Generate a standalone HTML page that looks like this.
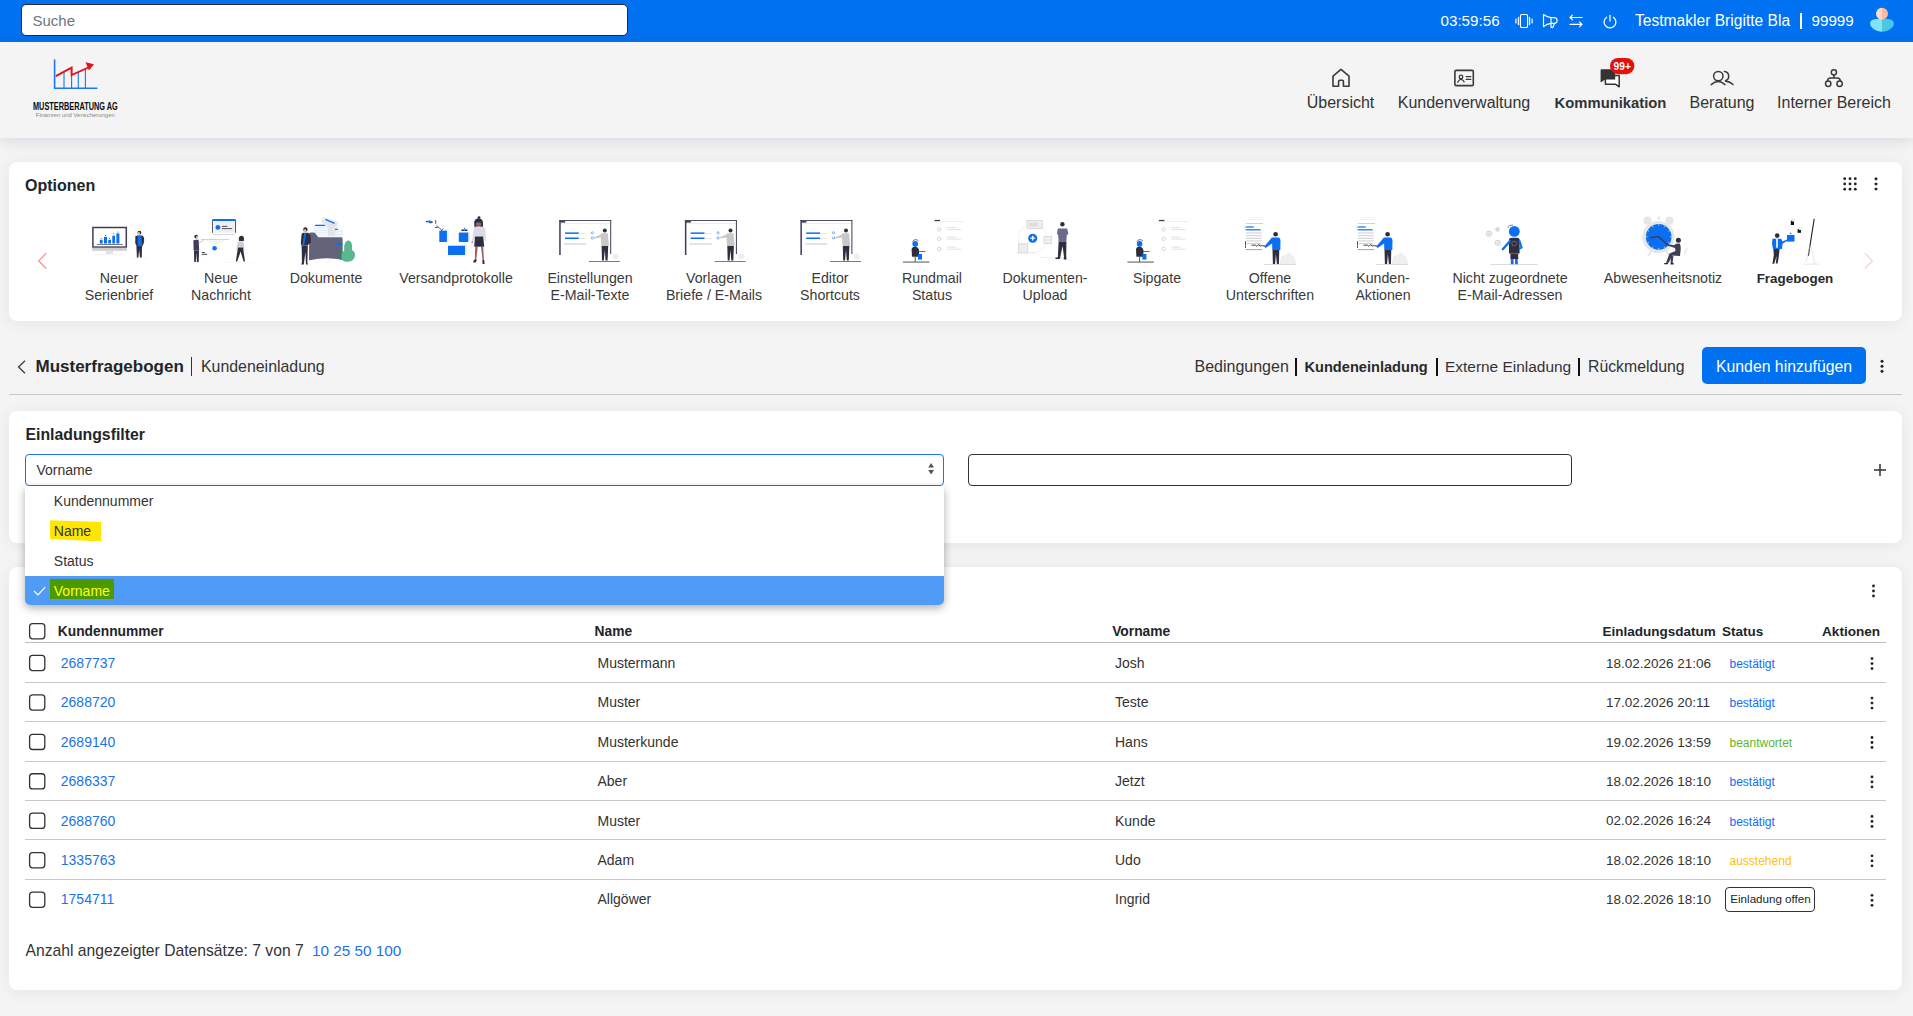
<!DOCTYPE html>
<html><head><meta charset="utf-8">
<style>
*{box-sizing:border-box;margin:0;padding:0}
html,body{width:1913px;height:1016px;overflow:hidden}
body{background:#f4f4f4;font-family:"Liberation Sans",sans-serif;color:#212529;position:relative}
.t{position:absolute;white-space:nowrap;line-height:1}
.bx{position:absolute}
.card{position:absolute;left:9px;width:1893px;background:#fff;border-radius:8px;box-shadow:0 2px 16px rgba(0,0,0,.065)}
svg{position:absolute;left:0;top:0}
</style></head><body>
<div class="bx" style="left:0;top:0;width:1913px;height:42px;background:#0071f0"></div>
<div class="bx" style="left:21px;top:4px;width:607px;height:32px;background:#fff;border:1px solid #2a2a2a;border-radius:5px"></div>
<div class="t" style="left:32.5px;top:13.00px;font-size:15px;color:#6c757d;">Suche</div>
<div class="t" style="left:1440.5px;top:13.00px;font-size:15.2px;color:#fff;">03:59:56</div>
<div class="t" style="left:1635px;top:13.00px;font-size:15.6px;color:#fff;">Testmakler Brigitte Bla</div>
<div class="bx" style="left:1800.2px;top:13px;width:2px;height:16px;background:#fff"></div>
<div class="t" style="left:1811.5px;top:13.00px;font-size:15.2px;color:#fff;">99999</div>
<div class="bx" style="left:0;top:42px;width:1913px;height:96px;background:#f4f4f4;box-shadow:0 3px 14px rgba(30,50,90,.13)"></div>
<div class="t" style="left:1190.5px;width:300px;text-align:center;top:95.00px;font-size:16px;color:#333;">Übersicht</div>
<div class="t" style="left:1314px;width:300px;text-align:center;top:95.00px;font-size:16px;color:#333;">Kundenverwaltung</div>
<div class="t" style="left:1460.5px;width:300px;text-align:center;top:96.00px;font-size:14.8px;color:#333;font-weight:bold;">Kommunikation</div>
<div class="t" style="left:1572px;width:300px;text-align:center;top:95.00px;font-size:16px;color:#333;">Beratung</div>
<div class="t" style="left:1684px;width:300px;text-align:center;top:95.00px;font-size:16px;color:#333;">Interner Bereich</div>
<div class="card" style="top:162px;height:159px"></div>
<div class="t" style="left:25px;top:178.00px;font-size:16px;color:#212529;font-weight:bold;">Optionen</div>
<div class="t" style="left:-31px;width:300px;text-align:center;top:271.00px;font-size:14.2px;color:#3a3a3a;">Neuer</div>
<div class="t" style="left:-31px;width:300px;text-align:center;top:288.00px;font-size:14.2px;color:#3a3a3a;">Serienbrief</div>
<div class="t" style="left:71px;width:300px;text-align:center;top:271.00px;font-size:14.2px;color:#3a3a3a;">Neue</div>
<div class="t" style="left:71px;width:300px;text-align:center;top:288.00px;font-size:14.2px;color:#3a3a3a;">Nachricht</div>
<div class="t" style="left:176px;width:300px;text-align:center;top:271.00px;font-size:14.2px;color:#3a3a3a;">Dokumente</div>
<div class="t" style="left:306px;width:300px;text-align:center;top:271.00px;font-size:14.2px;color:#3a3a3a;">Versandprotokolle</div>
<div class="t" style="left:440px;width:300px;text-align:center;top:271.00px;font-size:14.2px;color:#3a3a3a;">Einstellungen</div>
<div class="t" style="left:440px;width:300px;text-align:center;top:288.00px;font-size:14.2px;color:#3a3a3a;">E-Mail-Texte</div>
<div class="t" style="left:564px;width:300px;text-align:center;top:271.00px;font-size:14.2px;color:#3a3a3a;">Vorlagen</div>
<div class="t" style="left:564px;width:300px;text-align:center;top:288.00px;font-size:14.2px;color:#3a3a3a;">Briefe / E-Mails</div>
<div class="t" style="left:680px;width:300px;text-align:center;top:271.00px;font-size:14.2px;color:#3a3a3a;">Editor</div>
<div class="t" style="left:680px;width:300px;text-align:center;top:288.00px;font-size:14.2px;color:#3a3a3a;">Shortcuts</div>
<div class="t" style="left:782px;width:300px;text-align:center;top:271.00px;font-size:14.2px;color:#3a3a3a;">Rundmail</div>
<div class="t" style="left:782px;width:300px;text-align:center;top:288.00px;font-size:14.2px;color:#3a3a3a;">Status</div>
<div class="t" style="left:895px;width:300px;text-align:center;top:271.00px;font-size:14.2px;color:#3a3a3a;">Dokumenten-</div>
<div class="t" style="left:895px;width:300px;text-align:center;top:288.00px;font-size:14.2px;color:#3a3a3a;">Upload</div>
<div class="t" style="left:1007px;width:300px;text-align:center;top:271.00px;font-size:14.2px;color:#3a3a3a;">Sipgate</div>
<div class="t" style="left:1120px;width:300px;text-align:center;top:271.00px;font-size:14.2px;color:#3a3a3a;">Offene</div>
<div class="t" style="left:1120px;width:300px;text-align:center;top:288.00px;font-size:14.2px;color:#3a3a3a;">Unterschriften</div>
<div class="t" style="left:1233px;width:300px;text-align:center;top:271.00px;font-size:14.2px;color:#3a3a3a;">Kunden-</div>
<div class="t" style="left:1233px;width:300px;text-align:center;top:288.00px;font-size:14.2px;color:#3a3a3a;">Aktionen</div>
<div class="t" style="left:1360px;width:300px;text-align:center;top:271.00px;font-size:14.2px;color:#3a3a3a;">Nicht zugeordnete</div>
<div class="t" style="left:1360px;width:300px;text-align:center;top:288.00px;font-size:14.2px;color:#3a3a3a;">E-Mail-Adressen</div>
<div class="t" style="left:1513px;width:300px;text-align:center;top:271.00px;font-size:14.2px;color:#3a3a3a;">Abwesenheitsnotiz</div>
<div class="t" style="left:1645px;width:300px;text-align:center;top:272.00px;font-size:13.4px;color:#2a2a2a;font-weight:bold;">Fragebogen</div>
<div class="t" style="left:35.5px;top:358.00px;font-size:17px;color:#212529;font-weight:bold;">Musterfragebogen</div>
<div class="bx" style="left:191px;top:357px;width:1.3px;height:19px;background:#333"></div>
<div class="t" style="left:201px;top:359.00px;font-size:15.9px;color:#333;">Kundeneinladung</div>
<div class="t" style="left:1194.5px;top:359.00px;font-size:16px;color:#333;">Bedingungen</div>
<div class="bx" style="left:1295px;top:358px;width:2.2px;height:17.6px;background:#111"></div>
<div class="t" style="left:1304.5px;top:360.00px;font-size:14.6px;color:#2a2a2a;font-weight:bold;">Kundeneinladung</div>
<div class="bx" style="left:1436.2px;top:358px;width:2.2px;height:17.6px;background:#111"></div>
<div class="t" style="left:1445px;top:359.00px;font-size:15.45px;color:#333;">Externe Einladung</div>
<div class="bx" style="left:1578.3px;top:358px;width:2.2px;height:17.6px;background:#111"></div>
<div class="t" style="left:1588px;top:359.00px;font-size:15.8px;color:#333;">Rückmeldung</div>
<div class="bx" style="left:1702px;top:347px;width:164px;height:37px;background:#0071f0;border-radius:5px"></div>
<div class="t" style="left:1716px;top:359.00px;font-size:15.8px;color:#fff;">Kunden hinzufügen</div>
<div class="bx" style="left:9px;top:394px;width:1893px;height:1px;background:#c8c8c8"></div>
<div class="card" style="top:411px;height:132px"></div>
<div class="t" style="left:25.5px;top:427.00px;font-size:15.8px;color:#212529;font-weight:bold;">Einladungsfilter</div>
<div class="bx" style="left:25px;top:454px;width:919px;height:32px;border:1px solid #1a73f0;border-radius:4px;background:#fff"></div>
<div class="t" style="left:36.5px;top:463.00px;font-size:14px;color:#333;">Vorname</div>
<div class="bx" style="left:968px;top:454px;width:604px;height:32px;border:1.3px solid #333;border-radius:4px;background:#fff"></div>
<div class="card" style="top:567px;height:423px"></div>
<div class="t" style="left:57.8px;top:625.00px;font-size:13.8px;color:#212529;font-weight:bold;">Kundennummer</div>
<div class="t" style="left:594.5px;top:625.00px;font-size:13.8px;color:#212529;font-weight:bold;">Name</div>
<div class="t" style="left:1112.2px;top:625.00px;font-size:13.8px;color:#212529;font-weight:bold;">Vorname</div>
<div class="t" style="left:1602.5px;top:625.00px;font-size:13.5px;color:#212529;font-weight:bold;">Einladungsdatum</div>
<div class="t" style="left:1722px;top:625.00px;font-size:13.5px;color:#212529;font-weight:bold;">Status</div>
<div class="t" style="left:1822px;top:625.00px;font-size:13.6px;color:#212529;font-weight:bold;">Aktionen</div>
<div class="bx" style="left:25px;top:642px;width:1861px;height:1px;background:#bdbdbd"></div>
<div class="t" style="left:60.8px;top:656.00px;font-size:14px;color:#1a73e8;">2687737</div>
<div class="t" style="left:597.5px;top:656.00px;font-size:14px;color:#333;">Mustermann</div>
<div class="t" style="left:1115px;top:656.00px;font-size:14px;color:#333;">Josh</div>
<div class="t" style="left:1606px;top:657.00px;font-size:13.5px;color:#333;">18.02.2026 21:06</div>
<div class="t" style="left:1729.5px;top:658.00px;font-size:12px;color:#0d6efd;">bestätigt</div>
<div class="bx" style="left:25px;top:682px;width:1861px;height:1px;background:#c8c8c8"></div>
<div class="t" style="left:60.8px;top:695.00px;font-size:14px;color:#1a73e8;">2688720</div>
<div class="t" style="left:597.5px;top:695.00px;font-size:14px;color:#333;">Muster</div>
<div class="t" style="left:1115px;top:695.00px;font-size:14px;color:#333;">Teste</div>
<div class="t" style="left:1606px;top:696.00px;font-size:13.5px;color:#333;">17.02.2026 20:11</div>
<div class="t" style="left:1729.5px;top:697.00px;font-size:12px;color:#0d6efd;">bestätigt</div>
<div class="bx" style="left:25px;top:721px;width:1861px;height:1px;background:#c8c8c8"></div>
<div class="t" style="left:60.8px;top:735.00px;font-size:14px;color:#1a73e8;">2689140</div>
<div class="t" style="left:597.5px;top:735.00px;font-size:14px;color:#333;">Musterkunde</div>
<div class="t" style="left:1115px;top:735.00px;font-size:14px;color:#333;">Hans</div>
<div class="t" style="left:1606px;top:736.00px;font-size:13.5px;color:#333;">19.02.2026 13:59</div>
<div class="t" style="left:1729.5px;top:737.00px;font-size:12px;color:#5cb82c;">beantwortet</div>
<div class="bx" style="left:25px;top:761px;width:1861px;height:1px;background:#c8c8c8"></div>
<div class="t" style="left:60.8px;top:774.00px;font-size:14px;color:#1a73e8;">2686337</div>
<div class="t" style="left:597.5px;top:774.00px;font-size:14px;color:#333;">Aber</div>
<div class="t" style="left:1115px;top:774.00px;font-size:14px;color:#333;">Jetzt</div>
<div class="t" style="left:1606px;top:775.00px;font-size:13.5px;color:#333;">18.02.2026 18:10</div>
<div class="t" style="left:1729.5px;top:776.00px;font-size:12px;color:#0d6efd;">bestätigt</div>
<div class="bx" style="left:25px;top:800px;width:1861px;height:1px;background:#c8c8c8"></div>
<div class="t" style="left:60.8px;top:814.00px;font-size:14px;color:#1a73e8;">2688760</div>
<div class="t" style="left:597.5px;top:814.00px;font-size:14px;color:#333;">Muster</div>
<div class="t" style="left:1115px;top:814.00px;font-size:14px;color:#333;">Kunde</div>
<div class="t" style="left:1606px;top:814.00px;font-size:13.5px;color:#333;">02.02.2026 16:24</div>
<div class="t" style="left:1729.5px;top:816.00px;font-size:12px;color:#0d6efd;">bestätigt</div>
<div class="bx" style="left:25px;top:839px;width:1861px;height:1px;background:#c8c8c8"></div>
<div class="t" style="left:60.8px;top:853.00px;font-size:14px;color:#1a73e8;">1335763</div>
<div class="t" style="left:597.5px;top:853.00px;font-size:14px;color:#333;">Adam</div>
<div class="t" style="left:1115px;top:853.00px;font-size:14px;color:#333;">Udo</div>
<div class="t" style="left:1606px;top:854.00px;font-size:13.5px;color:#333;">18.02.2026 18:10</div>
<div class="t" style="left:1729.5px;top:855.00px;font-size:12px;color:#ffc107;">ausstehend</div>
<div class="bx" style="left:25px;top:879px;width:1861px;height:1px;background:#c8c8c8"></div>
<div class="t" style="left:60.8px;top:892.00px;font-size:14px;color:#1a73e8;">1754711</div>
<div class="t" style="left:597.5px;top:892.00px;font-size:14px;color:#333;">Allgöwer</div>
<div class="t" style="left:1115px;top:892.00px;font-size:14px;color:#333;">Ingrid</div>
<div class="t" style="left:1606px;top:893.00px;font-size:13.5px;color:#333;">18.02.2026 18:10</div>
<div class="bx" style="left:1725px;top:887.3px;width:90px;height:24.5px;border:1px solid #333;border-radius:4px"></div>
<div class="t" style="left:1730.3px;top:893.00px;font-size:11.6px;color:#212529;">Einladung offen</div>
<div class="t" style="left:25.5px;top:943.00px;font-size:15.7px;color:#333;">Anzahl angezeigter Datensätze: 7 von 7</div>
<div class="t" style="left:312px;top:943.00px;font-size:15.3px;color:#1a73e8;">10 25 50 100</div>
<div class="bx" style="left:25px;top:486px;width:919px;height:119px;background:#fff;border-radius:0 0 5px 5px;box-shadow:0 3px 9px rgba(0,0,0,.32);overflow:hidden"><div class="bx" style="left:0;top:90px;width:919px;height:29px;background:#4f9bf5"></div></div>
<div class="bx" style="left:49.6px;top:520.3px;width:51.7px;height:21.2px;background:#ffe600;clip-path:polygon(0 0,100% 8%,100% 100%,0 88%)"></div>
<div class="bx" style="left:50px;top:579px;width:64px;height:20px;background:#4c9a00"></div>
<div class="t" style="left:53.8px;top:494.00px;font-size:14px;color:#333;">Kundennummer</div>
<div class="t" style="left:53.8px;top:524.00px;font-size:14px;color:#333;">Name</div>
<div class="t" style="left:53.8px;top:554.00px;font-size:14px;color:#333;">Status</div>
<div class="t" style="left:53.8px;top:584.00px;font-size:14px;color:#ffff1a;">Vorname</div>
<svg width="1913" height="1016" viewBox="0 0 1913 1016">
<!-- top bar icons -->
<g fill="none" stroke="#fff" stroke-width="1.2" stroke-linecap="round" stroke-linejoin="round">
  <rect x="1520.4" y="14.5" width="7.2" height="13" rx="1.6"/>
  <path d="M1518.4 17.6 V24.4 M1529.6 17.6 V24.4"/>
  <path d="M1515.9 19.1 V22.9 M1532.1 19.1 V22.9"/>
  <path d="M1543.5 14.6 Q1547 17.3 1551 17.6 H1554.2 A2.9 2.9 0 0 1 1554.2 23.4 H1551 Q1547 23.7 1543.5 26.6 Z"/>
  <path d="M1551 17.6 V27.2 L1552.8 27.6 L1554.4 23.6"/>
  <path d="M1570 17.5 H1582 M1572.4 15.1 L1570 17.5 L1572.4 19.9"/>
  <path d="M1570 24.4 H1582 M1579.6 22 L1582 24.4 L1579.6 26.8"/>
  <path d="M1606.62 17.17 A5.9 5.9 0 1 0 1613.38 17.17" stroke-width="1.3"/>
  <path d="M1610 15.4 V21" stroke-width="1.3"/>
</g>
<!-- avatar -->
<path d="M1882 19.1 H1876 Q1870.2 19.5 1870 23.6 C1870.4 28.2 1876 31.8 1882 31.8 Z" fill="#82e2f6"/>
<path d="M1882 19.1 H1888 Q1893.8 19.5 1894 23.6 C1893.6 28.2 1888 31.8 1882 31.8 Z" fill="#4bc6e4"/>
<path d="M1882 7.8 A6 6 0 0 0 1882 19.8 Z" fill="#fddccb"/>
<path d="M1882 7.8 A6 6 0 0 1 1882 19.8 Z" fill="#fcbaa0"/>

<!-- logo -->
<g>
  <path d="M54.6 60 V88.2 H96.8" fill="none" stroke="#1a78f2" stroke-width="1.6" stroke-linecap="round" stroke-linejoin="round"/>
  <path d="M64 72 V88 M71.6 67.5 V88 M78.3 72 V88 M85.4 68 V88" stroke="#1a78f2" stroke-width="1.1"/>
  <path d="M55.8 76.2 L71.6 67.6 L71.6 75 L89.5 67" fill="none" stroke="#e8101a" stroke-width="1.9" stroke-linejoin="miter"/>
  <path d="M85.5 62.2 L94 64.2 L89 70.5 Z" fill="#e8101a"/>
  <text x="33" y="109.8" font-family="Liberation Sans" font-weight="bold" font-size="11.6" fill="#0a0a0a" textLength="84.8" lengthAdjust="spacingAndGlyphs">MUSTERBERATUNG AG</text>
  <text x="35.8" y="117.2" font-family="Liberation Sans" font-size="5.2" fill="#888" textLength="79" lengthAdjust="spacingAndGlyphs">Finanzen und Versicherungen</text>
</g>

<!-- nav icons -->
<g fill="none" stroke="#3a3a3a" stroke-width="1.6" stroke-linejoin="round" stroke-linecap="round">
  <path d="M1333 86.2 V76.2 L1341 69.4 L1349 76.2 V86.2 H1343.4 V81.4 Q1343.4 80.2 1342.2 80.2 H1339.8 Q1338.6 80.2 1338.6 81.4 V86.2 Z"/>
  <rect x="1454.9" y="70.4" width="18.4" height="15.2" rx="1.2"/>
  <circle cx="1461" cy="76.9" r="1.8" stroke-width="1.3"/>
  <path d="M1457.7 82.2 Q1459.4 79.2 1461 79.4 Q1462.6 79.4 1464.2 81.8" stroke-width="1.3"/>
  <path d="M1466.2 76.6 H1470.8 M1466.2 79.4 H1470.8" stroke-width="1.3"/>
  <circle cx="1718.3" cy="76.1" r="4.7" stroke-width="1.5"/>
  <path d="M1711.2 84.6 Q1718.2 78.4 1725 84.6" stroke-width="1.5"/>
  <path d="M1724.4 71.6 A4.6 4.6 0 0 1 1725.4 80.6" stroke-width="1.5"/>
  <path d="M1725.8 81.2 Q1730 81.4 1733 84.6" stroke-width="1.5"/>
  <circle cx="1833.9" cy="72.3" r="2.6" stroke-width="1.5"/>
  <circle cx="1828.2" cy="83.7" r="2.7" stroke-width="1.5"/>
  <circle cx="1839.6" cy="83.7" r="2.7" stroke-width="1.5"/>
  <path d="M1833.9 74.9 V78 M1827.4 81.1 Q1827.6 78 1830.6 78 H1837.2 Q1840.2 78 1840.4 81.1" stroke-width="1.5"/>
</g>
<!-- chat icon -->
<path d="M1605.4 75.6 H1619.2 V86.8 L1615.4 84.2 H1605.4 Z" fill="#fff" stroke="#333" stroke-width="1.5" stroke-linejoin="round"/>
<path d="M1600.6 70.2 Q1600.6 69.2 1601.6 69.2 H1615.2 V79.6 H1605.2 L1600.6 82.6 Z" fill="#333"/>

<rect x="1610" y="58" width="24.4" height="16.2" rx="8.1" fill="#e3100e"/>
<text x="1622.2" y="70.2" text-anchor="middle" font-family="Liberation Sans" font-weight="bold" font-size="10.2" fill="#fff">99+</text>

<!-- options card icons -->
<g fill="#222">
  <circle cx="1844.7" cy="178.7" r="1.4"/><circle cx="1850" cy="178.7" r="1.4"/><circle cx="1855.3" cy="178.7" r="1.4"/>
  <circle cx="1844.7" cy="183.9" r="1.4"/><circle cx="1850" cy="183.9" r="1.4"/><circle cx="1855.3" cy="183.9" r="1.4"/>
  <circle cx="1844.7" cy="189.2" r="1.4"/><circle cx="1850" cy="189.2" r="1.4"/><circle cx="1855.3" cy="189.2" r="1.4"/>
  <rect x="1874.7" y="177.6" width="2.6" height="2.6" rx="0.6"/>
  <rect x="1874.7" y="182.7" width="2.6" height="2.6" rx="0.6"/>
  <rect x="1874.7" y="187.7" width="2.6" height="2.6" rx="0.6"/>
</g>
<path d="M46.3 253.2 L38.6 260.9 L46.3 268.5" fill="none" stroke="#ff9c9c" stroke-width="1.5"/>
<path d="M1864.8 253.2 L1872.4 260.9 L1864.8 268.5" fill="none" stroke="#ffd5d5" stroke-width="1.5"/>

<rect x="92.9" y="227.5" width="33.4" height="19.6" fill="#fff" stroke="#3f3d56" stroke-width="1.5"/>
<rect x="92.2" y="247.8" width="34.8" height="3" fill="#cfcfcf"/>
<rect x="105.8" y="250.8" width="7.2" height="3.6" fill="#e4e4e4"/>
<rect x="95" y="254.4" width="30" height="0.8" fill="#f0f0f0"/>
<rect x="99.8" y="239.8" width="2.8" height="3.7" fill="#0a6ff0"/>
<rect x="104" y="236.9" width="3" height="6.6" fill="#0a6ff0"/>
<rect x="108.2" y="239.8" width="2.8" height="3.7" fill="#0a6ff0"/>
<rect x="112.3" y="235.7" width="2.8" height="7.8" fill="#0a6ff0"/>
<rect x="116.4" y="233.4" width="3" height="10.1" fill="#0a6ff0"/>
<circle cx="101.2" cy="238.4" r="0.5" fill="#3f3d56"/><circle cx="105.5" cy="235.5" r="0.55" fill="#3f3d56"/><circle cx="109.6" cy="238.4" r="0.5" fill="#3f3d56"/><circle cx="113.7" cy="233.8" r="0.5" fill="#3f3d56"/><circle cx="117.9" cy="232" r="0.5" fill="#3f3d56"/>
<rect x="97" y="244" width="25.8" height="0.8" fill="#555"/>
<circle cx="139.4" cy="232.6" r="1.9" fill="#2f2e41"/><circle cx="138.7" cy="233.4" r="1.3" fill="#f0b8a8"/>
<path d="M135.4 236 Q137 235.4 139 235.6 H142 Q144 236 144.2 240 L143.8 243 L142.6 246 H136.6 L135.2 243 Z" fill="#2f2e41"/>
<path d="M137.6 235.8 H141.4 L142.2 246.2 H137.8 Z" fill="#0a6ff0"/>
<path d="M136.4 246 H142 L141.8 257.6 H139.9 L139.2 250 L138.3 257.8 H136.9 Z" fill="#2f2e41"/>
<rect x="131" y="258.3" width="6" height="0.6" fill="#eee"/><rect x="143" y="258.3" width="6" height="0.6" fill="#eee"/>
<rect x="213.6" y="221" width="21" height="11.8" fill="#efefef"/>
<rect x="212.2" y="218.9" width="23.6" height="2.1" rx="0.8" fill="#0a6ff0"/>
<rect x="212.1" y="220.5" width="0.9" height="12.3" fill="#3f3d56"/><rect x="235" y="220.5" width="0.9" height="12.3" fill="#3f3d56"/>
<circle cx="217.9" cy="227.4" r="2.4" fill="#0a6ff0"/>
<rect x="222" y="225.9" width="5.4" height="0.9" fill="#3f3d56"/><rect x="222" y="228.2" width="10.2" height="0.9" fill="#3f3d56"/>
<rect x="213" y="234.2" width="22" height="0.8" fill="#cfcfd6"/>
<rect x="201" y="239.1" width="28" height="0.9" fill="#cfcfd6"/>
<path d="M205 240.2 H225 L215 244.8 Z" fill="#f3f3f3"/>
<circle cx="214.6" cy="248.2" r="2.3" fill="#0a6ff0"/>
<circle cx="196.2" cy="236.6" r="1.9" fill="#2f2e41"/><circle cx="197" cy="237.2" r="1.1" fill="#f0b8a8"/>
<path d="M193.4 240.2 Q193.6 239.8 196 239.8 H198.6 L199.2 250.6 H193.6 Z" fill="#3f3d56"/>
<path d="M194 250.6 H199 L198.7 262 H196.9 L196.4 252 L195.8 262 H194.2 Z" fill="#2f2e41"/>
<path d="M199 243 L203.6 240" stroke="#f0a0a0" stroke-width="0.9"/>
<rect x="201.8" y="252" width="3" height="0.9" fill="#2f2e41"/><rect x="201.8" y="253.8" width="5.4" height="0.9" fill="#2f2e41"/>
<path d="M238.8 238.6 Q239 235.8 241.6 235.8 Q244 235.8 244 238.8 L243.8 241 H239 Z" fill="#2f2e41"/>
<path d="M237.6 241.6 H243.4 L244.6 250.4 H243.4 L243 247.4 H238 L237.4 250 H236.4 Z" fill="#cfcfcf"/>
<path d="M238 247.4 H243 L245 261.6 H243.6 L240.6 251.6 L237.2 261.6 H235.8 Z" fill="#2f2e41"/>
<rect x="224" y="262.3" width="30" height="0.6" fill="#f2f2f2"/>
<rect x="313" y="224" width="17" height="13" fill="#f1f6fd"/>
<rect x="313.5" y="227.5" width="16" height="0.6" fill="#dbe7f7"/><rect x="313.5" y="230" width="16" height="0.6" fill="#dbe7f7"/><rect x="313.5" y="232.5" width="16" height="0.6" fill="#dbe7f7"/>
<rect x="332" y="229" width="11" height="8" fill="#f1f6fd"/>
<rect x="333" y="231.5" width="10" height="0.6" fill="#dbe7f7"/><rect x="333" y="234" width="10" height="0.6" fill="#dbe7f7"/>
<path d="M323.4 217 L338.4 222.2 L335 236.5 L327.4 236 L328 228 L321 221.4 Z" fill="#e6e8ee"/>
<path d="M328.5 224 L335.5 226 M328.2 226.5 L335 228.5 M328 229 L334.5 231 M328 231.5 L334 233.4 M328 234 L333.6 235.6" stroke="#cdd5e4" stroke-width="0.6"/>
<rect x="315" y="224.8" width="10" height="1.2" rx="0.5" fill="#0a6ff0"/>
<path d="M325.4 219.4 L334.6 223.4" stroke="#0a6ff0" stroke-width="1.2"/>
<rect x="335" y="228.8" width="3.2" height="1.1" fill="#0a6ff0"/>
<path d="M309.2 233.6 Q309.2 232.6 310.4 232.6 H313.4 Q314.4 232.6 315.2 233.2 L318.2 237.2 H341.2 Q342.6 237.2 342.6 238.6 V259.8 Q326 256.6 309.6 260.2 Q309 260.2 309 259.4 Z" fill="#65637a"/>
<rect x="336" y="243" width="6.4" height="2" fill="#0a6ff0"/>
<path d="M338.4 256 C338.2 251 340 248 342 248.4 L342.6 259.8 C340 260 338.6 259 338.4 256 Z" fill="#3e7a6a"/>
<path d="M344.6 252 C343.2 246 345 240.4 348.4 240.4 C352 240.6 352.6 246 351.8 251 Z" fill="#5bb88c"/>
<path d="M341.6 258 C341 252 344 249.6 347.4 250 C350 248.8 355 250 355 255 C355 260 350.4 262 346.4 261.8 C343.4 261.6 341.8 260.6 341.6 258 Z" fill="#5bb88c"/>
<circle cx="305.4" cy="229.4" r="2.2" fill="#2f2e41"/><circle cx="305" cy="230.6" r="1.3" fill="#f0b8a8"/>
<path d="M301.6 234 Q302.4 232.8 304 232.8 H307.6 Q310.4 233.4 310.8 238 L311 242.6 L308.4 244.6 L307.8 245.4 H301.4 L300.8 243 Z" fill="#2f2e41"/>
<path d="M304.4 233 H306.2 L304.2 245 H302.4 Z" fill="#0a6ff0"/>
<path d="M301.6 245.4 H307.8 L307.4 262.6 L308 264.4 H306 L305.4 252 L303.8 264.4 H301.2 L302 262.4 Z" fill="#2f2e41"/>
<rect x="441" y="229.8" width="7.6" height="11.3" fill="#ececec"/>
<rect x="439.3" y="230.7" width="7.6" height="11.3" fill="#0a6ff0"/>
<rect x="460.5" y="231.8" width="9.4" height="9.4" fill="#ececec"/>
<rect x="458.8" y="232.6" width="9.4" height="9.4" fill="#0a6ff0"/>
<rect x="449.8" y="244.8" width="17" height="9.2" fill="#ececec"/>
<rect x="448" y="245.8" width="17" height="9.2" fill="#0a6ff0"/>
<ellipse cx="427" cy="221.6" rx="1" ry="0.9" fill="#2f2e41"/><path d="M428 220.6 Q431 219.8 433 222 Q431 223.4 428.6 222.6 Z" fill="#0a6ff0"/><path d="M429 222.6 Q431 223.6 433 222" stroke="#2f2e41" stroke-width="0.6" fill="none"/>
<rect x="435.2" y="220" width="1" height="3.8" rx="0.5" fill="#555"/>
<path d="M434.4 227.8 Q436 226 438.4 227.4 Q436.6 228.6 434.4 227.8 Z" fill="#0a6ff0"/>
<path d="M436.6 225.4 L439.6 228.4 L441.4 229.6 M441 231 L443.2 228.6" stroke="#2f2e41" stroke-width="0.8" fill="none"/>
<path d="M461.4 231 Q461 229 463 229.2 L464.6 230.6 L466 229.2 Q468 229 467.4 231 Z" fill="#2f2e41"/><path d="M463.6 229.8 L464.6 227.2 L465.6 229.8 Z" fill="#0a6ff0"/>
<path d="M474.2 224 Q473.6 218.6 478.6 218.2 Q483.2 218.4 483 223.4 L483 227 L474.6 227.4 Z" fill="#2f2e41"/><circle cx="479" cy="217.6" r="1.4" fill="#2f2e41"/>
<rect x="475.8" y="222.4" width="5.4" height="3.4" rx="1.4" fill="#a0616a"/>
<path d="M474 227.4 Q476 226 479 226.2 Q483.6 226.2 485.4 228 L486 240.8 L484.8 241 L484 236.6 H475.4 L473.2 242 L471.8 241.6 Z" fill="#dcdae6"/>
<circle cx="472.2" cy="242.2" r="0.8" fill="#a0616a"/>
<path d="M475 236.4 H483.2 L484.2 246.8 H474.2 Z" fill="#2f2e41"/>
<path d="M475.2 246.8 H477.8 L476.2 260.4 H474.8 Z M481 246.8 H483.2 L484 260.8 H482.6 Z" fill="#a0616a"/>
<path d="M474.6 259.6 H476.6 L476.2 262.2 L473.2 262.4 Q473 261 474.6 259.6 Z M482.4 260 H484.2 L484.6 264 H482.6 Z" fill="#2f2e41"/>
<rect x="559.2" y="220" width="52" height="0.9" fill="#3f3d56"/>
<rect x="560.2" y="221" width="5" height="1.6" fill="#3f3d56"/>
<rect x="559.2" y="223" width="52" height="0.6" fill="#e4e4e4"/>
<rect x="559.2" y="220" width="1.5" height="35" fill="#3f3d56"/>
<rect x="610.2" y="220" width="1" height="34" fill="#3f3d56"/>
<rect x="565.0" y="232.4" width="13.8" height="1.5" fill="#0a6ff0"/>
<rect x="565.0" y="237.5" width="13.8" height="1.5" fill="#0a6ff0"/>
<rect x="578.8000000000001" y="233" width="7" height="0.5" fill="#ccc"/><rect x="578.8000000000001" y="238" width="7" height="0.5" fill="#ccc"/>
<rect x="564.0" y="243.6" width="22" height="0.8" fill="#bbb"/>
<circle cx="592.4000000000001" cy="232.8" r="1.1" fill="none" stroke="#0a6ff0" stroke-width="0.5"/><circle cx="592.4000000000001" cy="238" r="1.1" fill="none" stroke="#0a6ff0" stroke-width="0.5"/>
<circle cx="604.8000000000001" cy="230.6" r="2" fill="#2f2e41"/>
<path d="M601.2 233.2 H607.8000000000001 L609.0 246 H601.4000000000001 L600.8000000000001 237.5 L593.7 238.6 L593.7 237.4 L600.8000000000001 234.6 Z" fill="#c8c8c8"/>
<path d="M601.6 246 H608.2 L607.6 260.4 H605.6 L604.8000000000001 250 L603.8000000000001 260.4 H602.0 Z" fill="#2f2e41"/>
<circle cx="615.5" cy="256.6" r="3" fill="#eeeeee"/>
<rect x="588.9000000000001" y="261" width="31" height="0.7" fill="#3f3d56"/>
<rect x="684.9" y="220" width="52" height="0.9" fill="#3f3d56"/>
<rect x="685.9" y="221" width="5" height="1.6" fill="#3f3d56"/>
<rect x="684.9" y="223" width="52" height="0.6" fill="#e4e4e4"/>
<rect x="684.9" y="220" width="1.5" height="35" fill="#3f3d56"/>
<rect x="735.9" y="220" width="1" height="34" fill="#3f3d56"/>
<rect x="690.6999999999999" y="232.4" width="13.8" height="1.5" fill="#0a6ff0"/>
<rect x="690.6999999999999" y="237.5" width="13.8" height="1.5" fill="#0a6ff0"/>
<rect x="704.5" y="233" width="7" height="0.5" fill="#ccc"/><rect x="704.5" y="238" width="7" height="0.5" fill="#ccc"/>
<rect x="689.6999999999999" y="243.6" width="22" height="0.8" fill="#bbb"/>
<circle cx="718.1" cy="232.8" r="1.1" fill="none" stroke="#0a6ff0" stroke-width="0.5"/><circle cx="718.1" cy="238" r="1.1" fill="none" stroke="#0a6ff0" stroke-width="0.5"/>
<circle cx="730.5" cy="230.6" r="2" fill="#2f2e41"/>
<path d="M726.9 233.2 H733.5 L734.6999999999999 246 H727.1 L726.5 237.5 L719.4 238.6 L719.4 237.4 L726.5 234.6 Z" fill="#c8c8c8"/>
<path d="M727.3 246 H733.9 L733.3 260.4 H731.3 L730.5 250 L729.5 260.4 H727.6999999999999 Z" fill="#2f2e41"/>
<circle cx="741.1999999999999" cy="256.6" r="3" fill="#eeeeee"/>
<rect x="714.6" y="261" width="31" height="0.7" fill="#3f3d56"/>
<rect x="800.4" y="220" width="52" height="0.9" fill="#3f3d56"/>
<rect x="801.4" y="221" width="5" height="1.6" fill="#3f3d56"/>
<rect x="800.4" y="223" width="52" height="0.6" fill="#e4e4e4"/>
<rect x="800.4" y="220" width="1.5" height="35" fill="#3f3d56"/>
<rect x="851.4" y="220" width="1" height="34" fill="#3f3d56"/>
<rect x="806.1999999999999" y="232.4" width="13.8" height="1.5" fill="#0a6ff0"/>
<rect x="806.1999999999999" y="237.5" width="13.8" height="1.5" fill="#0a6ff0"/>
<rect x="820.0" y="233" width="7" height="0.5" fill="#ccc"/><rect x="820.0" y="238" width="7" height="0.5" fill="#ccc"/>
<rect x="805.1999999999999" y="243.6" width="22" height="0.8" fill="#bbb"/>
<circle cx="833.6" cy="232.8" r="1.1" fill="none" stroke="#0a6ff0" stroke-width="0.5"/><circle cx="833.6" cy="238" r="1.1" fill="none" stroke="#0a6ff0" stroke-width="0.5"/>
<circle cx="846.0" cy="230.6" r="2" fill="#2f2e41"/>
<path d="M842.4 233.2 H849.0 L850.1999999999999 246 H842.6 L842.0 237.5 L834.9 238.6 L834.9 237.4 L842.0 234.6 Z" fill="#c8c8c8"/>
<path d="M842.8 246 H849.4 L848.8 260.4 H846.8 L846.0 250 L845.0 260.4 H843.1999999999999 Z" fill="#2f2e41"/>
<circle cx="856.6999999999999" cy="256.6" r="3" fill="#eeeeee"/>
<rect x="830.1" y="261" width="31" height="0.7" fill="#3f3d56"/>
<path d="M912.5 241.6 A3.6 3.6 0 0 1 918.5 241" fill="none" stroke="#2f2e41" stroke-width="0.7"/>
<circle cx="915.2" cy="243.9" r="2.8" fill="#0a6ff0"/>
<path d="M911.6 249.5 Q912 246.6 915 246.8 Q918.5 247 919 250 L919 256.8 H912 Z" fill="#2f2e41"/>
<rect x="917.5" y="251" width="8" height="0.7" fill="#2f2e41"/>
<rect x="918" y="254" width="4" height="5.6" fill="#0a6ff0"/>
<rect x="914.7" y="256.8" width="1" height="5" fill="#555"/>
<rect x="903" y="261.6" width="26.5" height="0.9" fill="#3f3d56"/>
<rect x="934.5" y="219.9" width="5.5" height="1.3" fill="#3f3d56"/>
<rect x="933" y="221" width="31" height="0.5" fill="#ddd"/>
<circle cx="939.2" cy="229.5" r="1.7" fill="none" stroke="#bbb" stroke-width="0.6"/>
<rect x="947" y="227.5" width="9" height="0.6" fill="#ccc"/><rect x="947" y="229.5" width="14" height="0.6" fill="#ccc"/>
<circle cx="939.2" cy="238.8" r="1.7" fill="none" stroke="#bbb" stroke-width="0.6"/>
<rect x="947" y="236.8" width="9" height="0.6" fill="#ccc"/><rect x="947" y="238.8" width="14" height="0.6" fill="#ccc"/>
<circle cx="939.2" cy="248.8" r="1.7" fill="none" stroke="#bbb" stroke-width="0.6"/>
<rect x="947" y="246.8" width="9" height="0.6" fill="#ccc"/><rect x="947" y="248.8" width="14" height="0.6" fill="#ccc"/>
<path d="M1136.9 241.6 A3.6 3.6 0 0 1 1142.9 241" fill="none" stroke="#2f2e41" stroke-width="0.7"/>
<circle cx="1139.6000000000001" cy="243.9" r="2.8" fill="#0a6ff0"/>
<path d="M1136.0 249.5 Q1136.4 246.6 1139.4 246.8 Q1142.9 247 1143.4 250 L1143.4 256.8 H1136.4 Z" fill="#2f2e41"/>
<rect x="1141.9" y="251" width="8" height="0.7" fill="#2f2e41"/>
<rect x="1142.4" y="254" width="4" height="5.6" fill="#0a6ff0"/>
<rect x="1139.1000000000001" y="256.8" width="1" height="5" fill="#555"/>
<rect x="1127.4" y="261.6" width="26.5" height="0.9" fill="#3f3d56"/>
<rect x="1158.9" y="219.9" width="5.5" height="1.3" fill="#3f3d56"/>
<rect x="1157.4" y="221" width="31" height="0.5" fill="#ddd"/>
<circle cx="1163.6000000000001" cy="229.5" r="1.7" fill="none" stroke="#bbb" stroke-width="0.6"/>
<rect x="1171.4" y="227.5" width="9" height="0.6" fill="#ccc"/><rect x="1171.4" y="229.5" width="14" height="0.6" fill="#ccc"/>
<circle cx="1163.6000000000001" cy="238.8" r="1.7" fill="none" stroke="#bbb" stroke-width="0.6"/>
<rect x="1171.4" y="236.8" width="9" height="0.6" fill="#ccc"/><rect x="1171.4" y="238.8" width="14" height="0.6" fill="#ccc"/>
<circle cx="1163.6000000000001" cy="248.8" r="1.7" fill="none" stroke="#bbb" stroke-width="0.6"/>
<rect x="1171.4" y="246.8" width="9" height="0.6" fill="#ccc"/><rect x="1171.4" y="248.8" width="14" height="0.6" fill="#ccc"/>
<circle cx="1032.8" cy="238.2" r="14.5" fill="none" stroke="#e8e8e8" stroke-width="0.6"/>
<rect x="1027" y="220.4" width="15.3" height="8.1" fill="#eee" stroke="#cfcfcf" stroke-width="0.7"/>
<rect x="1029" y="222.6" width="9" height="3.8" fill="#ddd"/>
<rect x="1044" y="236.6" width="7.7" height="7" fill="#eee" stroke="#cfcfcf" stroke-width="0.7"/>
<rect x="1018.5" y="243.9" width="9.3" height="8.9" fill="#eee" stroke="#cfcfcf" stroke-width="0.7"/>
<rect x="1015" y="252.8" width="22" height="0.5" fill="#ddd"/><rect x="1040" y="257.4" width="24" height="0.6" fill="#e6e6e6"/><rect x="1048" y="259.6" width="26" height="0.6" fill="#eee"/>
<circle cx="1032.7" cy="238.2" r="4.5" fill="#0a6ff0"/>
<path d="M1030.3 238.2 H1035.1 M1032.7 235.8 V240.6" stroke="#fff" stroke-width="1.3"/>
<circle cx="1062.4" cy="224.2" r="2.2" fill="#2f2e41"/>
<path d="M1057.8 228.4 H1067.2 L1068.4 234 L1066.8 235 L1066.4 241.6 H1058.6 L1058.2 235 L1057 234 Z" fill="#6c6a8c"/>
<path d="M1058.6 241.6 H1066.4 L1066.2 258.4 H1064.2 L1062.6 246 L1060 258.4 H1057.8 Z" fill="#2f2e41"/>
<path d="M1055.6 257.4 H1060 V259 H1055.4 Z M1063.8 257.6 H1066.4 V259.6 H1063.8 Z" fill="#2f2e41"/>
<rect x="1249.9" y="217.2" width="13" height="0.5" fill="#e8e8e8"/><rect x="1247.9" y="219.4" width="16" height="0.5" fill="#e0e0e0"/>
<rect x="1245.9" y="223.2" width="17" height="0.8" fill="#c8c8c8"/><rect x="1245.5" y="249.2" width="17" height="0.9" fill="#9a98a8"/><rect x="1244.9" y="226" width="0.6" height="4.6" fill="#aaa"/>
<rect x="1246.1000000000001" y="226.4" width="7.6" height="1.2" fill="#0a6ff0"/>
<rect x="1246.1000000000001" y="229.2" width="14.6" height="1.2" fill="#0a6ff0"/>
<rect x="1246.1000000000001" y="232.4" width="15.6" height="1.1" fill="#d2d2d2"/>
<rect x="1246.1000000000001" y="235.1" width="15.6" height="1.1" fill="#d2d2d2"/>
<rect x="1246.1000000000001" y="237.8" width="15.6" height="1.1" fill="#d2d2d2"/>
<rect x="1246.1000000000001" y="240.4" width="15.6" height="1.1" fill="#d2d2d2"/>
<rect x="1246.1000000000001" y="243" width="15.6" height="1.1" fill="#d2d2d2"/>
<path d="M1251.5 245.2 H1255.5 L1256.9 246.4 L1258.9 244.4 L1259.9 246 L1261.9 245.6 L1265.5 246.2" fill="none" stroke="#2f2e41" stroke-width="0.9"/>
<rect x="1245.1000000000001" y="241" width="0.9" height="7" fill="#555"/>
<path d="M1279.9 264 Q1279.9 254 1285.9 255 Q1288.9 250 1291.9 255 Q1295.9 257 1295.9 264 Z" fill="#efefef"/>
<rect x="1264.4" y="264" width="32" height="0.7" fill="#ccc"/>
<circle cx="1275.6000000000001" cy="234.2" r="2.3" fill="#2f2e41"/>
<path d="M1271.9 237.4 H1278.9 Q1280.5 238 1280.5 241 L1280.3000000000002 250 H1272.3000000000002 L1272.1000000000001 243.5 L1265.5 248 L1264.3000000000002 246.6 Z" fill="#0a6ff0"/>
<path d="M1272.5 250 H1279.3000000000002 L1278.9 264 H1276.9 L1275.9 254 L1275.1000000000001 264 H1272.9 Z" fill="#2f2e41"/>
<rect x="1361.9" y="217.2" width="13" height="0.5" fill="#e8e8e8"/><rect x="1359.9" y="219.4" width="16" height="0.5" fill="#e0e0e0"/>
<rect x="1357.9" y="223.2" width="17" height="0.8" fill="#c8c8c8"/><rect x="1357.5" y="249.2" width="17" height="0.9" fill="#9a98a8"/><rect x="1356.9" y="226" width="0.6" height="4.6" fill="#aaa"/>
<rect x="1358.1000000000001" y="226.4" width="7.6" height="1.2" fill="#0a6ff0"/>
<rect x="1358.1000000000001" y="229.2" width="14.6" height="1.2" fill="#0a6ff0"/>
<rect x="1358.1000000000001" y="232.4" width="15.6" height="1.1" fill="#d2d2d2"/>
<rect x="1358.1000000000001" y="235.1" width="15.6" height="1.1" fill="#d2d2d2"/>
<rect x="1358.1000000000001" y="237.8" width="15.6" height="1.1" fill="#d2d2d2"/>
<rect x="1358.1000000000001" y="240.4" width="15.6" height="1.1" fill="#d2d2d2"/>
<rect x="1358.1000000000001" y="243" width="15.6" height="1.1" fill="#d2d2d2"/>
<path d="M1363.5 245.2 H1367.5 L1368.9 246.4 L1370.9 244.4 L1371.9 246 L1373.9 245.6 L1377.5 246.2" fill="none" stroke="#2f2e41" stroke-width="0.9"/>
<rect x="1357.1000000000001" y="241" width="0.9" height="7" fill="#555"/>
<path d="M1391.9 264 Q1391.9 254 1397.9 255 Q1400.9 250 1403.9 255 Q1407.9 257 1407.9 264 Z" fill="#efefef"/>
<rect x="1376.4" y="264" width="32" height="0.7" fill="#ccc"/>
<circle cx="1387.6000000000001" cy="234.2" r="2.3" fill="#2f2e41"/>
<path d="M1383.9 237.4 H1390.9 Q1392.5 238 1392.5 241 L1392.3000000000002 250 H1384.3000000000002 L1384.1000000000001 243.5 L1377.5 248 L1376.3000000000002 246.6 Z" fill="#0a6ff0"/>
<path d="M1384.5 250 H1391.3000000000002 L1390.9 264 H1388.9 L1387.9 254 L1387.1000000000001 264 H1384.9 Z" fill="#2f2e41"/>
<circle cx="1489" cy="233.7" r="2.6" fill="none" stroke="#aaa" stroke-width="0.6"/><circle cx="1489" cy="233.7" r="1.04" fill="none" stroke="#aaa" stroke-width="0.5"/>
<circle cx="1497.5" cy="229.4" r="1.8" fill="none" stroke="#aaa" stroke-width="0.6"/><circle cx="1497.5" cy="229.4" r="0.72" fill="none" stroke="#aaa" stroke-width="0.5"/>
<circle cx="1497.8" cy="242.8" r="2.6" fill="none" stroke="#aaa" stroke-width="0.6"/><circle cx="1497.8" cy="242.8" r="1.04" fill="none" stroke="#aaa" stroke-width="0.5"/>
<path d="M1507.5 228 Q1509 224.5 1513 225" fill="none" stroke="#555" stroke-width="0.8"/>
<circle cx="1514.3" cy="231.4" r="5.4" fill="#0a6ff0"/>
<path d="M1509 240 Q1509 237.8 1512 237.8 H1517 Q1519.6 237.8 1519.6 240 V253.5 H1509 Z" fill="#2f2e41"/>
<circle cx="1514.2" cy="243.5" r="2.4" fill="none" stroke="#888" stroke-width="0.6"/>
<path d="M1510 241 L1502.8 249.2" stroke="#0a6ff0" stroke-width="2.3" stroke-linecap="round"/>
<path d="M1519.4 240.5 L1521.6 247.6 L1519.6 248.6" stroke="#0a6ff0" stroke-width="2" fill="none" stroke-linecap="round"/>
<rect x="1510.4" y="253.5" width="7.8" height="5.5" fill="#2f2e41"/>
<rect x="1510.8" y="259" width="2.8" height="5.6" fill="#0a6ff0"/><rect x="1515" y="259" width="2.8" height="5.6" fill="#0a6ff0"/>
<rect x="1490.5" y="264.2" width="47" height="0.7" fill="#ccc"/>
<circle cx="1647.6" cy="220.6" r="4.2" fill="#e6e6e6"/><circle cx="1669.4" cy="220.6" r="4.2" fill="#e6e6e6"/>
<rect x="1657.5" y="216.6" width="2.4" height="3" fill="#e6e6e6"/>
<path d="M1651 251 L1648.5 256 M1666.5 251 L1669 256" stroke="#e6e6e6" stroke-width="1.8"/>
<circle cx="1658.5" cy="237" r="16.1" fill="#e6e6e6"/>
<circle cx="1658.7" cy="236.9" r="12.8" fill="#0a6ff0"/>
<path d="M1669.90 236.90 L1671.30 236.90" stroke="#fff" stroke-width="0.7"/>
<path d="M1668.40 242.50 L1669.61 243.20" stroke="#fff" stroke-width="0.7"/>
<path d="M1664.30 246.60 L1665.00 247.81" stroke="#fff" stroke-width="0.7"/>
<path d="M1658.70 248.10 L1658.70 249.50" stroke="#fff" stroke-width="0.7"/>
<path d="M1653.10 246.60 L1652.40 247.81" stroke="#fff" stroke-width="0.7"/>
<path d="M1649.00 242.50 L1647.79 243.20" stroke="#fff" stroke-width="0.7"/>
<path d="M1647.50 236.90 L1646.10 236.90" stroke="#fff" stroke-width="0.7"/>
<path d="M1649.00 231.30 L1647.79 230.60" stroke="#fff" stroke-width="0.7"/>
<path d="M1653.10 227.20 L1652.40 225.99" stroke="#fff" stroke-width="0.7"/>
<path d="M1658.70 225.70 L1658.70 224.30" stroke="#fff" stroke-width="0.7"/>
<path d="M1664.30 227.20 L1665.00 225.99" stroke="#fff" stroke-width="0.7"/>
<path d="M1668.40 231.30 L1669.61 230.60" stroke="#fff" stroke-width="0.7"/>
<path d="M1650.2 237.8 L1658.6 236.6 L1667.4 244.8" fill="none" stroke="#3f3d56" stroke-width="1.5" stroke-linecap="round"/>
<path d="M1684 256 Q1683 249 1688 247 Q1687 253 1684 256 Z" fill="#eee"/>
<circle cx="1678.4" cy="240.2" r="2.5" fill="#2f2e41"/>
<path d="M1667.6 244.2 L1674 245.2 Q1676 242.8 1679.6 243.6 Q1681 245 1680.6 250 L1680 256 L1672 255.6 L1668.8 262.8 L1666 263 L1669.5 253.6 L1675.5 251 L1675 248 L1667.2 245.6 Z" fill="#3f3d56"/>
<path d="M1670.6 255.6 L1673.4 255.8 L1672.6 263 L1670.8 263 Z" fill="#3f3d56"/><path d="M1664.2 263 H1668 V264.3 H1664 Z M1670.6 262.8 H1673.6 V264.4 H1670.4 Z" fill="#2f2e41"/>
<rect x="1790.8" y="220.8" width="3.2" height="4.2" fill="#111"/><rect x="1792" y="219.4" width="2.6" height="2" fill="#fff" stroke="#999" stroke-width="0.3"/>
<rect x="1797.6" y="229.2" width="3.4" height="3.6" fill="#111"/><rect x="1799" y="228" width="2.6" height="2" fill="#fff" stroke="#999" stroke-width="0.3"/>
<path d="M1814.2 218.8 L1808.4 255.6" stroke="#222" stroke-width="1.1"/>
<path d="M1810.8 246 L1815 264 M1810 246 L1806 262" stroke="#ccc" stroke-width="0.5"/>
<rect x="1803" y="263.8" width="16" height="0.5" fill="#ccc"/>
<rect x="1787" y="235" width="7.5" height="6.6" fill="#0a6ff0"/><circle cx="1790.6" cy="233.4" r="0.8" fill="#0a6ff0"/>
<circle cx="1777.2" cy="235.6" r="2.3" fill="#2f2e41"/>
<path d="M1772.4 238.8 H1781.2 L1782.6 241.6 L1787 239.6 L1787.4 240.8 L1782.6 243.8 L1782 249 H1773 L1772 244 Z" fill="#0a6ff0"/>
<rect x="1776.2" y="238.8" width="1.6" height="9" fill="#fff"/>
<path d="M1773.4 249 H1779.6 L1778.6 258 L1777.6 263.6 H1775.8 L1776.6 256 L1774.2 263.8 H1772.4 L1773.8 255 Z" fill="#2f2e41"/>

<!-- breadcrumb -->
<path d="M25 360.8 L18.6 367 L25 373.2" fill="none" stroke="#444" stroke-width="1.4"/>
<g fill="#222">
  <circle cx="1882" cy="361.3" r="1.5"/><circle cx="1882" cy="366.3" r="1.5"/><circle cx="1882" cy="371.3" r="1.5"/>
</g>
<!-- select arrows -->
<path d="M928.2 467.6 L931.1 463 L934 467.6 Z M928.2 470 L934 470 L931.1 474.6 Z" fill="#555"/>
<path d="M1874 470 H1886 M1880 464 V476" stroke="#333" stroke-width="1.5"/>
<!-- table card kebab -->
<g fill="#222">
  <circle cx="1873.5" cy="586" r="1.4"/><circle cx="1873.5" cy="591" r="1.4"/><circle cx="1873.5" cy="596" r="1.4"/>
</g>
<rect x="29.6" y="623.6" width="15.2" height="15.2" rx="3" fill="#fff" stroke="#333" stroke-width="1.3"/>
<rect x="29.6" y="655.40" width="15.2" height="15.2" rx="3" fill="#fff" stroke="#333" stroke-width="1.3"/>
<circle cx="1872" cy="658.60" r="1.4" fill="#222"/>
<circle cx="1872" cy="663.60" r="1.4" fill="#222"/>
<circle cx="1872" cy="668.60" r="1.4" fill="#222"/>
<rect x="29.6" y="694.85" width="15.2" height="15.2" rx="3" fill="#fff" stroke="#333" stroke-width="1.3"/>
<circle cx="1872" cy="698.05" r="1.4" fill="#222"/>
<circle cx="1872" cy="703.05" r="1.4" fill="#222"/>
<circle cx="1872" cy="708.05" r="1.4" fill="#222"/>
<rect x="29.6" y="734.30" width="15.2" height="15.2" rx="3" fill="#fff" stroke="#333" stroke-width="1.3"/>
<circle cx="1872" cy="737.50" r="1.4" fill="#222"/>
<circle cx="1872" cy="742.50" r="1.4" fill="#222"/>
<circle cx="1872" cy="747.50" r="1.4" fill="#222"/>
<rect x="29.6" y="773.75" width="15.2" height="15.2" rx="3" fill="#fff" stroke="#333" stroke-width="1.3"/>
<circle cx="1872" cy="776.95" r="1.4" fill="#222"/>
<circle cx="1872" cy="781.95" r="1.4" fill="#222"/>
<circle cx="1872" cy="786.95" r="1.4" fill="#222"/>
<rect x="29.6" y="813.20" width="15.2" height="15.2" rx="3" fill="#fff" stroke="#333" stroke-width="1.3"/>
<circle cx="1872" cy="816.40" r="1.4" fill="#222"/>
<circle cx="1872" cy="821.40" r="1.4" fill="#222"/>
<circle cx="1872" cy="826.40" r="1.4" fill="#222"/>
<rect x="29.6" y="852.65" width="15.2" height="15.2" rx="3" fill="#fff" stroke="#333" stroke-width="1.3"/>
<circle cx="1872" cy="855.85" r="1.4" fill="#222"/>
<circle cx="1872" cy="860.85" r="1.4" fill="#222"/>
<circle cx="1872" cy="865.85" r="1.4" fill="#222"/>
<rect x="29.6" y="892.10" width="15.2" height="15.2" rx="3" fill="#fff" stroke="#333" stroke-width="1.3"/>
<circle cx="1872" cy="895.30" r="1.4" fill="#222"/>
<circle cx="1872" cy="900.30" r="1.4" fill="#222"/>
<circle cx="1872" cy="905.30" r="1.4" fill="#222"/>
<!-- dropdown check -->
<path d="M34 591 L38 595 L45.2 587.2" fill="none" stroke="#fff" stroke-width="1.2"/>
</svg>
</body></html>
